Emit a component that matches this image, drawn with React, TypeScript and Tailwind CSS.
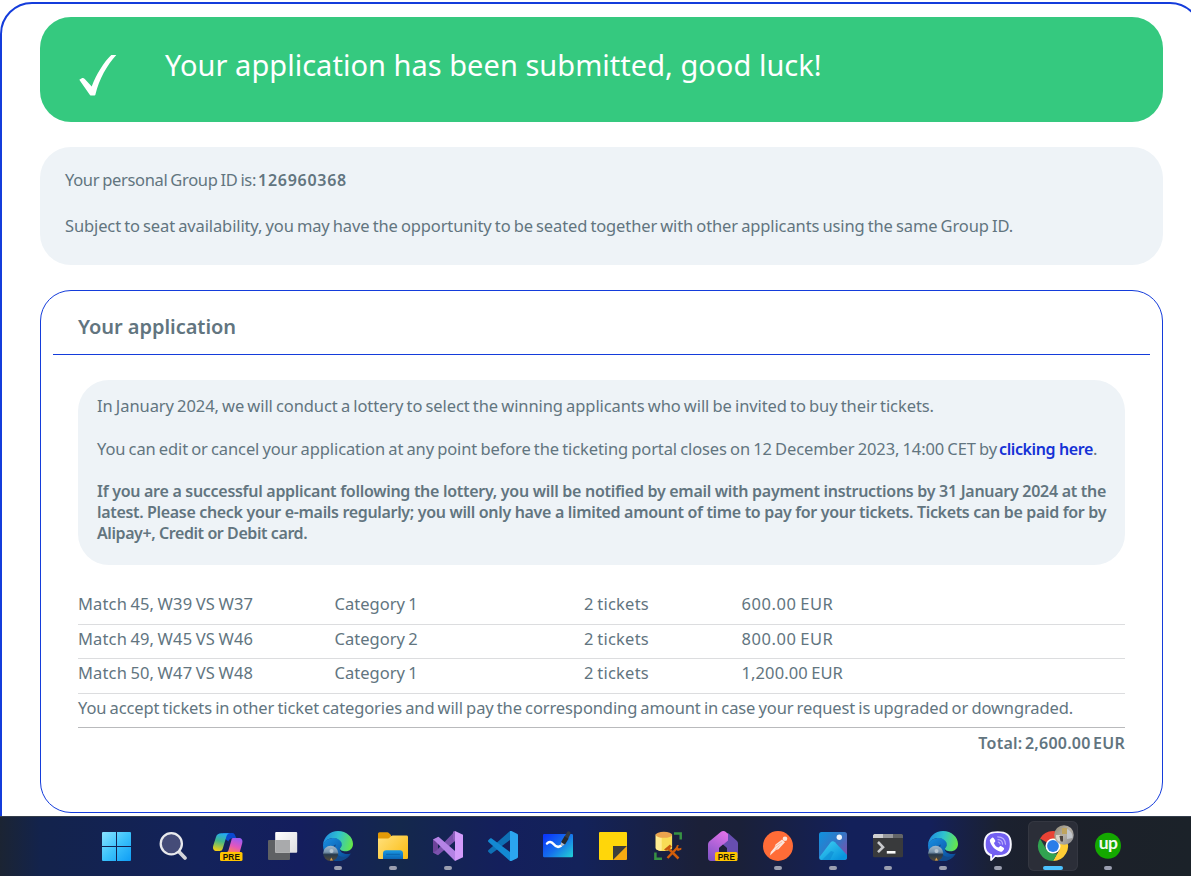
import type { ReactNode } from "react";

type IconProps = { children: ReactNode };

function Svg({ children }: IconProps) {
  return (
    <svg viewBox="0 0 30 30" className="size-[30px] overflow-visible">
      {children}
    </svg>
  );
}

function PreBadge() {
  return (
    <g>
      <rect x="7" y="21" width="22.5" height="9" rx="1.5" fill="#ffc400" />
      <text x="18.4" y="28.5" textAnchor="middle" fontSize="8.2" fontWeight="700" letterSpacing="0.2" fontFamily="Liberation Sans, sans-serif" fill="#1c1608">
        PRE
      </text>
    </g>
  );
}

function WindowsIcon() {
  return (
    <Svg>
      <defs>
        <linearGradient id="win" x1="0" y1="0" x2="30" y2="30" gradientUnits="userSpaceOnUse">
          <stop offset="0" stopColor="#8be3ff" />
          <stop offset="0.5" stopColor="#3cc2fb" />
          <stop offset="1" stopColor="#0d9cf5" />
        </linearGradient>
      </defs>
      <path transform="translate(-1 0)" fill="url(#win)" d="M1 1h13v14H0V2a1 1 0 0 1 1-1ZM15 1H28a1 1 0 0 1 1 1v13H15ZM0 16h14v14H1a1 1 0 0 1-1-1ZM15 16H29V29a1 1 0 0 1-1 1H15Z" />
    </Svg>
  );
}

function SearchIcon() {
  return (
    <Svg>
      <path d="M21 20.8 27 27" stroke="#d3d4da" strokeWidth="3.8" strokeLinecap="round" />
      <circle cx="13.3" cy="12.8" r="10.6" fill="#454c78" stroke="#e9eaed" strokeWidth="2.3" />
    </Svg>
  );
}

function CopilotIcon() {
  return (
    <Svg>
      <defs>
        <linearGradient id="cpA" x1="9" y1="2" x2="5" y2="20" gradientUnits="userSpaceOnUse">
          <stop offset="0" stopColor="#23a9f5" />
          <stop offset="0.45" stopColor="#42b88a" />
          <stop offset="1" stopColor="#f6cf12" />
        </linearGradient>
        <linearGradient id="cpB" x1="24" y1="7" x2="19" y2="22" gradientUnits="userSpaceOnUse">
          <stop offset="0" stopColor="#9a5cf5" />
          <stop offset="0.55" stopColor="#e356bd" />
          <stop offset="1" stopColor="#ff8551" />
        </linearGradient>
      </defs>
      <path d="M10 2h9.4c1.8 0 2.5 1.5 3 3l1 2.2h-4c-2.3 0-3.4 1.3-4 3.3L12 7.8Z" fill="#0a49cf" />
      <path d="M8.5 2.2H17c-2 0-3 1.3-3.6 3.4l-3.6 11.9c-.5 1.7-1.4 2.5-3 2.5H4c-3.3 0-4.7-2.2-3.7-5.6L3 6C3.8 3.3 5.5 2.2 8.5 2.2Z" fill="url(#cpA)" />
      <path d="M20 7h5.5c3.2 0 4.6 2 3.7 5.2L26.5 22H12l1.8-.7c1-.5 1.5-1.3 1.9-2.7l2.6-9.2C18.7 7.8 19 7 20 7Z" fill="url(#cpB)" />
      <PreBadge />
    </Svg>
  );
}

function TaskViewIcon() {
  return (
    <Svg>
      <defs>
        <linearGradient id="tv" x1="7" y1="1" x2="29" y2="22" gradientUnits="userSpaceOnUse">
          <stop offset="0" stopColor="#ffffff" />
          <stop offset="1" stopColor="#dedee0" />
        </linearGradient>
      </defs>
      <rect x="0" y="9" width="22" height="20" rx="1" fill="#5f6164" />
      <rect x="7.2" y="1" width="22" height="20.7" rx="1" fill="url(#tv)" />
      <path d="M7.2 9H22v12.7H8a.8.8 0 0 1-.8-.8Z" fill="#a9aaac" />
    </Svg>
  );
}

function EdgeIcon({ id }: { id: string }) {
  return (
    <Svg>
      <defs>
        <linearGradient id={`${id}-top`} x1="1" y1="8" x2="29" y2="16" gradientUnits="userSpaceOnUse">
          <stop offset="0" stopColor="#2190e0" />
          <stop offset="0.45" stopColor="#2fc2cf" />
          <stop offset="1" stopColor="#67e846" />
        </linearGradient>
        <linearGradient id={`${id}-low`} x1="3" y1="10" x2="18" y2="30" gradientUnits="userSpaceOnUse">
          <stop offset="0" stopColor="#1687da" />
          <stop offset="1" stopColor="#0b4f9d" />
        </linearGradient>
        <linearGradient id={`${id}-pic`} x1="0" y1="14" x2="0" y2="30" gradientUnits="userSpaceOnUse">
          <stop offset="0" stopColor="#a8bdce" />
          <stop offset="0.45" stopColor="#7794ad" />
          <stop offset="0.6" stopColor="#273a4c" />
          <stop offset="1" stopColor="#544b3a" />
        </linearGradient>
      </defs>
      <path d="M0 14C2 9 6 7 11 7c5 0 8 3 8 6.5 0 1.5-1.5 2.5-2 4-.8 3 3 5.5 7 5.5 2 0 3-.5 3.7-.3C25 27 20.5 30 15 30 7 30 0 24 0 14Z" fill={`url(#${id}-low)`} />
      <path d="M13 13.5c-3 5 1 12 7 12.5 3 .2 5.5-1.5 7.5-3.7C25 27 20.5 30 15 30c-5-1-8-8-6-13 .8-2 2.5-3.2 4-3.5Z" fill="#114b8e" />
      <path d="M0 14C.5 6 7 0 15 0c8.5 0 15 6 15 13 0 4.5-3.3 7.3-7.5 7.3-3.5 0-5.7-1.3-5.5-2.7.2-1 1.8-1.6 1.8-4C18.8 10 15 7 10.5 7 6 7 2 9.5 0 14Z" fill={`url(#${id}-top)`} />
      <circle cx="7.7" cy="22.3" r="7.6" fill={`url(#${id}-pic)`} />
      <circle cx="8.5" cy="20" r="2" fill="#b5c6d3" />
      <path d="m7 29.5 1.2-3 1.8 3Z" fill="#d9a04e" />
    </Svg>
  );
}

function FolderIcon() {
  return (
    <Svg>
      <defs>
        <linearGradient id="fold" x1="2" y1="4" x2="28" y2="28" gradientUnits="userSpaceOnUse">
          <stop offset="0" stopColor="#ffe07a" />
          <stop offset="1" stopColor="#fbbd15" />
        </linearGradient>
        <linearGradient id="foldb" x1="0" y1="19" x2="0" y2="28" gradientUnits="userSpaceOnUse">
          <stop offset="0" stopColor="#1b9be4" />
          <stop offset="1" stopColor="#0b66b6" />
        </linearGradient>
      </defs>
      <path d="M0 3c0-1 .6-1.7 1.6-1.7h7.6c.8 0 1.3.3 1.9.9L13 4v5H0Z" fill="#e39a06" />
      <path d="M0 7.5h9.5c1 0 1.6-.4 2.2-1l1.3-1.3c.5-.5 1-.7 1.7-.7H28.5c1 0 1.5.6 1.5 1.5V26.5c0 1-.6 1.5-1.5 1.5h-27C.6 28 0 27.5 0 26.5Z" fill="url(#fold)" />
      <path d="M5 28v-5.5C5 20.5 6.3 19.3 8.2 19.3h13.6c2 0 3.2 1.2 3.2 3.2V28Z" fill="url(#foldb)" />
      <path d="M8.5 23.3h13" stroke="#0b65ad" strokeWidth="1" strokeLinecap="round" />
    </Svg>
  );
}

function VisualStudioIcon() {
  return (
    <Svg>
      <path d="M0 8.500 5 6v18l-5-2.500Z" fill="#6c4399" />
      <path d="M22 0v10L5 24.200 0 21.500l3-1.500Z" fill="#7b52ad" />
      <path d="M0 8.500 5.500 5.800 22 20v10L2.500 10.500Z" fill="#b583e6" />
      <path d="m22 0 8 3.800v22.400L22 30Z" fill="#d39bfa" />
      <path d="M22 0 20 .8v7l2 3Z" fill="#8d60bd" />
    </Svg>
  );
}

function VsCodeIcon() {
  return (
    <Svg>
      <path d="M22 0v9L3.7 22.6c-.5.4-1.1.3-1.6-.1L.5 21c-.7-.6-.6-1.4 0-2Z" fill="#0e70b5" />
      <path d="M22 30v-9L3.7 7.4c-.5-.4-1.1-.3-1.6.1L.5 9c-.7.6-.6 1.4 0 2Z" fill="#1389d2" />
      <path d="M22 0c.5-.2 1-.1 1.5.1l5.5 2.7c.6.3 1 .8 1 1.5v21.400c0 .7-.4 1.200-1 1.500l-5.500 2.700c-.5.2-1 .3-1.500.1Z" fill="#2ba5f0" />
    </Svg>
  );
}

function WhiteboardIcon() {
  return (
    <Svg>
      <defs>
        <linearGradient id="wb" x1="4" y1="3" x2="27" y2="27" gradientUnits="userSpaceOnUse">
          <stop offset="0" stopColor="#0b38fb" />
          <stop offset="0.5" stopColor="#1671ec" />
          <stop offset="1" stopColor="#21cbd7" />
        </linearGradient>
      </defs>
      <rect x="0" y="3" width="30" height="23.3" rx="1.2" fill="url(#wb)" />
      <path d="M4 12.500c2-2.300 4.500-2 6.500.5s4.500 4 7.500 1.700" fill="none" stroke="#fff" strokeWidth="2.5" strokeLinecap="round" />
      <path d="m21.300 6 3-5.200c1-1.400 4 .2 3.200 1.900L24.800 8.600Z" fill="#363a41" />
      <path d="m18 11.300 3.500-6 4 2.500-3.600 6Z" fill="#25282d" />
      <path d="m18 11.300 3.900 2.400-3.900 1.500Z" fill="#b9bbc0" />
    </Svg>
  );
}

function StickyIcon() {
  return (
    <Svg>
      <path d="M2 1h26a1 1 0 0 1 1 1v13L15 29H2a1 1 0 0 1-1-1V2a1 1 0 0 1 1-1Z" fill="#ffd60a" />
      <path d="M15 29V15h14Z" fill="#3d3d3d" />
      <path d="M29 15v13a1 1 0 0 1-1 1H15Z" fill="#f5a912" />
    </Svg>
  );
}

function DatabaseToolsIcon() {
  return (
    <Svg>
      <path d="M2.700 3.500v13.600c0 4 16.400 4 16.400 0V3.500Z" fill="#f8dc56" />
      <path d="M2.700 3.500v13.600c0 1.700 2.600 2.700 6 3V4Z" fill="#ffec91" />
      <ellipse cx="10.9" cy="3.8" rx="8.2" ry="3" fill="#eaa34e" />
      <path d="M21 2.500h6.700V8.500M2.400 21.500v6.200H9" fill="none" stroke="#379243" strokeWidth="2.5" />
      <path d="m15 17 10.500 10.500" stroke="#d35e0a" strokeWidth="2.5" />
      <path d="m14.500 27 10-10.500" stroke="#d35e0a" strokeWidth="2.5" />
      <path d="m11 18.500 6-5 1.800 2.200-5.700 4Z" fill="#c5580d" />
      <path d="m24 14-1.400 3.800 2.200 2.200 3.500-1.300.1-2-2.700.7-.9-1.500 1.300-1.400Z" fill="#d35e0a" />
    </Svg>
  );
}

function DevHomeIcon() {
  return (
    <Svg>
      <defs>
        <linearGradient id="dh" x1="18" y1="2" x2="3" y2="28" gradientUnits="userSpaceOnUse">
          <stop offset="0" stopColor="#e071e8" />
          <stop offset="1" stopColor="#8355c8" />
        </linearGradient>
      </defs>
      <path d="M14 4 20 2l8.500 7.500c1 .9 1.500 2 1.500 3.300V27H19V18l-6-6Z" fill="#674eb0" />
      <path d="M12.700 1c1.600-1.300 3.600-1.300 5.200 0L20 3v6.500l-7 6c-1.300 1-2 2-2 3.500v11H3c-1.800 0-3-1.200-3-3V14c0-1.800.5-3 1.800-4Z" fill="url(#dh)" />
      <path d="M11 21v-4l4-3.500 4 3.500v4Z" fill="#1d2037" />
      <PreBadge />
    </Svg>
  );
}

function PostmanIcon() {
  return (
    <Svg>
      <circle cx="15" cy="15" r="15" fill="#ff6c37" />
      <circle cx="22" cy="7.7" r="2.3" fill="#fbe4da" />
      <path d="m19 8.500 3 2.800-6.500 7-2.500.8-6 5.500.8-3.600 3.700-4.500 1-3Z" fill="#fbe4da" />
      <path d="m16.500 14.500-4 4.500m6.500-8-7 4.500" stroke="#ff9a76" strokeWidth=".6" />
    </Svg>
  );
}

function PhotosIcon() {
  return (
    <Svg>
      <defs>
        <linearGradient id="ph" x1="4" y1="2" x2="29" y2="22" gradientUnits="userSpaceOnUse">
          <stop offset="0" stopColor="#148edb" />
          <stop offset="0.55" stopColor="#3675c5" />
          <stop offset="1" stopColor="#7952ad" />
        </linearGradient>
        <linearGradient id="ph2" x1="8" y1="11" x2="20" y2="29" gradientUnits="userSpaceOnUse">
          <stop offset="0" stopColor="#38c9f0" />
          <stop offset="1" stopColor="#0995dd" />
        </linearGradient>
      </defs>
      <rect x="1" y="1" width="28" height="28" rx="2.5" fill="url(#ph)" />
      <path d="m1.500 26 11-14.500c1.300-1.700 3-1.700 4.500-.2L29 24v2.500c0 1.500-1 2.500-2.500 2.500h-23c-1 0-2-.8-2-3Z" fill="url(#ph2)" />
      <path d="M16 21 12 29H4l9-9Z" fill="#0b86d2" opacity=".55" />
      <circle cx="21.3" cy="6.3" r="2.7" fill="#eef4fb" />
    </Svg>
  );
}

function TerminalIcon() {
  return (
    <Svg>
      <rect x="0" y="3" width="30" height="23.3" rx="1.3" fill="#393a3c" />
      <path d="M1.300 3H10v4H0V4.300Z" fill="#cfcfd1" />
      <path d="M10 3h10v4H10Z" fill="#97989b" />
      <path d="M20 3h8.700L30 4.300V7H20Z" fill="#626467" />
      <path d="m5 11 5 5.200-5 5" fill="none" stroke="#c9cacd" strokeWidth="2.6" />
      <rect x="13.8" y="20" width="8.7" height="2.6" fill="#fafafa" />
    </Svg>
  );
}

function ViberIcon() {
  return (
    <Svg>
      <path d="M14.700.2C6 .2.700 3 .700 13.400c0 6 2 9.800 6.500 11.500v4c0 1 1.100 1.400 1.800.6l3.300-3.400C23 26.600 28.800 24 28.800 13.200 28.800 3 23.500.2 14.700.2Z" fill="#f8f7ff" />
      <path d="M14.700 2C7.200 2 2.700 4 2.700 13.300c0 5.600 2 8.800 6.300 10v4l3-3.200c9.300.4 14.800-1.600 14.800-10.900C26.800 4 22.200 2 14.700 2Z" fill="#7360f2" />
      <path d="M7.200 8.500 9 6.800c.6-.5 1.200-.4 1.600.2l1.500 2.200c.4.600.3 1.200-.2 1.700l-1 1c.8 2.300 2.300 3.900 4.600 4.700l1.200-1.200c.5-.5 1-.5 1.600-.1l2.300 1.500c.6.4.7 1 .3 1.600l-1.500 1.800c-.7.700-1.600.6-2.500.3C11.700 18.500 8.200 14.700 7 10.400c-.2-.7-.3-1.400.2-1.900Z" fill="#fff" />
      <path d="M14.700 5.800c4.700.1 7.500 2.800 7.800 7.400m-7.500-4.600c2.800.2 4.400 1.700 4.600 4.500m-4.300-2c1 .1 1.600.7 1.700 1.800" fill="none" stroke="#b9aefb" strokeWidth="1.2" strokeLinecap="round" />
    </Svg>
  );
}

function ChromeIcon() {
  return (
    <Svg>
      <defs>
        <linearGradient id="chp" x1="17" y1="-4" x2="35" y2="12" gradientUnits="userSpaceOnUse">
          <stop offset="0" stopColor="#938b78" />
          <stop offset="0.5" stopColor="#b7b1a6" />
          <stop offset="1" stopColor="#8b8c91" />
        </linearGradient>
      </defs>
      <path d="M15 15 2 7.500A15 15 0 0 1 28 7.500H15Z" fill="#ea4335" />
      <path d="M15 7.500h13A15 15 0 0 1 15 30L21.500 18.750Z" fill="#ffcd35" />
      <path d="M2 7.500 8.500 18.750 15 22.500h4.300L15 30A15 15 0 0 1 2 7.500Z" fill="#31a350" />
      <circle cx="15" cy="15" r="7.5" fill="#fff" />
      <circle cx="15" cy="15" r="5.9" fill="#2b7de9" />
      <circle cx="26" cy="4" r="9.8" fill="url(#chp)" />
      <path d="M24-3h5v6h-5Z" fill="#bfa45f" />
      <path d="M29-2c4 2 6 5 5.500 9L29 8Z" fill="#c3c6cb" />
      <path d="M18 4h4l1 7-3-1c-1.500-1.600-2.500-4-2-6Z" fill="#dad5ca" />
      <path d="M21.500 5H25v5.500h-2.500Z" fill="#4a423f" />
    </Svg>
  );
}

function UpworkIcon() {
  return (
    <Svg>
      <circle cx="15" cy="14.7" r="13" fill="#14a800" />
      <text x="15" y="18.4" textAnchor="middle" fontSize="17.5" fontWeight="700" letterSpacing="-0.7" fontFamily="Lato, sans-serif" fill="#f1faef">
        up
      </text>
    </Svg>
  );
}

const apps: { name: string; icon: ReactNode; running?: boolean; active?: boolean }[] = [
  { name: "start", icon: <WindowsIcon /> },
  { name: "search", icon: <SearchIcon /> },
  { name: "copilot", icon: <CopilotIcon /> },
  { name: "taskview", icon: <TaskViewIcon /> },
  { name: "edge", icon: <EdgeIcon id="edge" />, running: true },
  { name: "explorer", icon: <FolderIcon />, running: true },
  { name: "visualstudio", icon: <VisualStudioIcon />, running: true },
  { name: "vscode", icon: <VsCodeIcon /> },
  { name: "whiteboard", icon: <WhiteboardIcon /> },
  { name: "sticky", icon: <StickyIcon /> },
  { name: "database", icon: <DatabaseToolsIcon /> },
  { name: "devhome", icon: <DevHomeIcon /> },
  { name: "postman", icon: <PostmanIcon />, running: true },
  { name: "photos", icon: <PhotosIcon />, running: true },
  { name: "terminal", icon: <TerminalIcon />, running: true },
  { name: "edge2", icon: <EdgeIcon id="edge2" />, running: true },
  { name: "viber", icon: <ViberIcon />, running: true },
  { name: "chrome", icon: <ChromeIcon />, active: true },
  { name: "upwork", icon: <UpworkIcon />, running: true },
];

function Taskbar() {
  return (
    <footer className="flex h-[60px] shrink-0 border-t border-[#343d4b] bg-[linear-gradient(90deg,#1b2433_0px,#13234c_40px,#13225a_200px,#141e5e_300px,#14284c_400px,#141f5c_500px,#13225a_580px,#1b2038_700px,#1a2039_740px,#13205a_850px,#14205a_930px,#1b2130_1000px,#1c2029_1060px,#1b2229_1191px)] pl-[90.5px]">
      {apps.map((app) => (
        <div key={app.name} className="flex w-[55px] shrink-0 justify-center pt-1">
          <div
            className={
              app.active
                ? "flex h-[50px] w-[50px] flex-col items-center rounded-md bg-[#2b2e38] pt-[10px] ring-1 ring-[#343741] ring-inset"
                : "flex h-[50px] w-[50px] flex-col items-center pt-[10px]"
            }
          >
            {app.icon}
            {app.running && <span className="mt-[5px] h-1 w-2 rounded-full bg-[#9b9fb0]" />}
            {app.active && <span className="mt-[5px] h-1 w-5 rounded-full bg-[#4cc2ff]" />}
          </div>
        </div>
      ))}
    </footer>
  );
}

const matches = [
  { match: "Match 45, W39 VS W37", category: "Category 1", amount: "600.00 EUR" },
  { match: "Match 49, W45 VS W46", category: "Category 2", amount: "800.00 EUR" },
  { match: "Match 50, W47 VS W48", category: "Category 1", amount: "1,200.00 EUR" },
];

export default function App() {
  return (
    <div className="flex h-[876px] w-[1191px] flex-col overflow-hidden bg-white font-['Noto_Sans',sans-serif] text-[16.5px] text-[#62757f]">
      <div className="h-[816px] shrink-0 overflow-hidden pt-[2px]">
        <main className="h-[900px] w-[1202px] rounded-[32px] border-2 border-[#143cdb] pt-[13px] pl-[38px]">
          <section className="flex h-[105px] w-[1123px] rounded-[31px] bg-[#35c97f] text-white">
            <svg viewBox="0 0 38 42" className="mt-[37px] ml-[39px] h-[42px] w-[38px] shrink-0">
              <path d="M.3 25.800 2.800 24.200C4 23.700 5 24.300 6 25.300l6.700 7.200C17.500 20 24.500 8.500 32.300 1h5C28 11 20 25.500 16.500 40.300c-.2 1-.6 1.300-1.500 1.300h-2.700c-.9 0-1.400-.4-1.900-1.300Z" fill="#fff" />
            </svg>
            <h1 className="mt-[28px] ml-[48px] text-[29px] leading-10 tracking-[0.030px] whitespace-nowrap">
              Your application has been submitted, good luck!
            </h1>
          </section>

          <section className="mt-[25px] h-[118px] w-[1123px] rounded-[31px] bg-[#eef3f7] pt-[21px] pl-[25px] whitespace-nowrap [word-spacing:-1px]">
            <p className="flex leading-6">
              <span className="w-[193px] tracking-[-0.330px]">Your personal Group ID is:</span>
              <b className="text-base leading-6 font-semibold tracking-[0.730px]">126960368</b>
            </p>
            <p className="mt-[22px] leading-6 tracking-[-0.120px]">
              Subject to seat availability, you may have the opportunity to be seated together with other applicants using the same Group ID.
            </p>
          </section>

          <section className="mt-[25px] h-[523px] w-[1123px] rounded-[31px] border border-[#143cdb] px-3">
            <header className="h-16 border-b border-[#143cdb] pt-[22px] pl-[25px]">
              <h2 className="text-xl leading-7 font-semibold tracking-[-0.040px] whitespace-nowrap">Your application</h2>
            </header>

            <div className="mx-[25px] mt-[25px]">
              <div className="h-[185px] rounded-[31px] bg-[#eef3f7] pt-[15px] pl-[19px] leading-[21px] whitespace-nowrap">
                <p className="tracking-[-0.085px] [word-spacing:-1px]">
                  In January 2024, we will conduct a lottery to select the winning applicants who will be invited to buy their tickets.
                </p>
                <p className="mt-[22px] flex">
                  <span className="w-[902px] tracking-[-0.105px] [word-spacing:-1px]">
                    You can edit or cancel your application at any point before the ticketing portal closes on 12 December 2023, 14:00 CET by
                  </span>
                  <a className="mt-px text-base leading-[21px] font-semibold tracking-[-0.385px] text-[#1431d6]">clicking here</a>
                  <span>.</span>
                </p>
                <p className="mt-[21px] text-base leading-[21px] font-semibold">
                  <span className="block tracking-[-0.286px]">
                    If you are a successful applicant following the lottery, you will be notified by email with payment instructions by 31 January 2024 at the
                  </span>
                  <span className="block tracking-[-0.330px]">
                    latest. Please check your e-mails regularly; you will only have a limited amount of time to pay for your tickets. Tickets can be paid for by
                  </span>
                  <span className="block tracking-[-0.420px]">Alipay+, Credit or Debit card.</span>
                </p>
              </div>

              <div className="mt-[25px] whitespace-nowrap">
                {matches.map((row) => (
                  <div
                    key={row.match}
                    className="grid h-[34.5px] grid-cols-[256.5px_249.5px_157.5px_1fr] items-start border-b border-[#dcdddf] pt-[2px] leading-6 [word-spacing:-1px]"
                  >
                    <span className="tracking-[0.145px]">{row.match}</span>
                    <span className="tracking-[0.020px]">{row.category}</span>
                    <span className="tracking-[0.240px]">2 tickets</span>
                    <span className={row.amount.length > 10 ? "tracking-[0.100px]" : "tracking-[0.550px]"}>{row.amount}</span>
                  </div>
                ))}
                <div className="h-[34.5px] border-b border-[#b9babc] pt-[2px] leading-6 tracking-[-0.108px] [word-spacing:-1px]">
                  You accept tickets in other ticket categories and will pay the corresponding amount in case your request is upgraded or downgraded.
                </div>
                <div className="flex justify-end pt-[3px] text-base leading-6 font-semibold tracking-[0.250px] [word-spacing:-2px]">
                  Total: 2,600.00 EUR
                </div>
              </div>
            </div>
          </section>
        </main>
      </div>
      <Taskbar />
    </div>
  );
}
